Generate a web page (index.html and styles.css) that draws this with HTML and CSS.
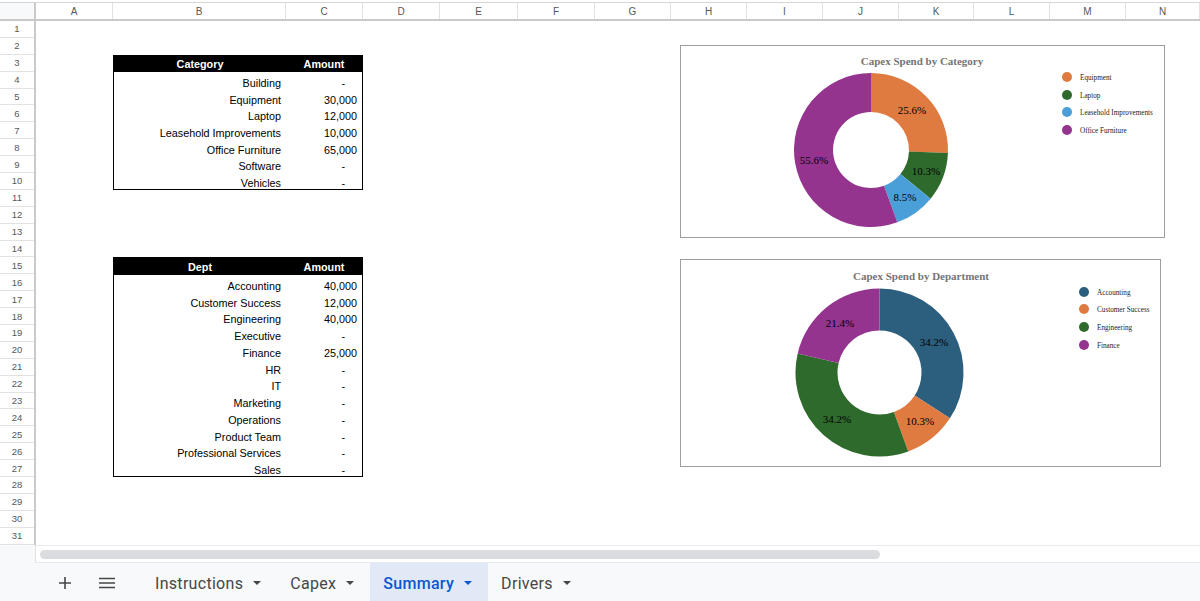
FILE: index.html
```html
<!DOCTYPE html>
<html lang="en">

<head>
    <meta charset="UTF-8">
    <meta name="viewport" content="width=device-width, initial-scale=1.0">
    <title>Capex - Summary</title>

    <link rel="stylesheet" href="styles.css">

</head>

<body>
    <div class="sheet">
        <div class="colheads">
            <div class="corner"></div>
            <div class="colhead">A</div>
            <div class="colhead">B</div>
            <div class="colhead">C</div>
            <div class="colhead">D</div>
            <div class="colhead">E</div>
            <div class="colhead">F</div>
            <div class="colhead">G</div>
            <div class="colhead">H</div>
            <div class="colhead">I</div>
            <div class="colhead">J</div>
            <div class="colhead">K</div>
            <div class="colhead">L</div>
            <div class="colhead">M</div>
            <div class="colhead">N</div>
        </div>

        <div class="main">
            <div class="rowheads">
                <div class="rowhead">1</div>
                <div class="rowhead">2</div>
                <div class="rowhead">3</div>
                <div class="rowhead">4</div>
                <div class="rowhead">5</div>
                <div class="rowhead">6</div>
                <div class="rowhead">7</div>
                <div class="rowhead">8</div>
                <div class="rowhead">9</div>
                <div class="rowhead">10</div>
                <div class="rowhead">11</div>
                <div class="rowhead">12</div>
                <div class="rowhead">13</div>
                <div class="rowhead">14</div>
                <div class="rowhead">15</div>
                <div class="rowhead">16</div>
                <div class="rowhead">17</div>
                <div class="rowhead">18</div>
                <div class="rowhead">19</div>
                <div class="rowhead">20</div>
                <div class="rowhead">21</div>
                <div class="rowhead">22</div>
                <div class="rowhead">23</div>
                <div class="rowhead">24</div>
                <div class="rowhead">25</div>
                <div class="rowhead">26</div>
                <div class="rowhead">27</div>
                <div class="rowhead">28</div>
                <div class="rowhead">29</div>
                <div class="rowhead">30</div>
                <div class="rowhead">31</div>
            </div>

            <div class="cells">
                <!-- category table -->
                <div class="tbl tbl-cat">
                    <div class="th">Category</div>
                    <div class="th">Amount</div>
                    <div class="td">Building</div>
                    <div class="td dash">-</div>
                    <div class="td">Equipment</div>
                    <div class="td">30,000</div>
                    <div class="td">Laptop</div>
                    <div class="td">12,000</div>
                    <div class="td">Leasehold Improvements</div>
                    <div class="td">10,000</div>
                    <div class="td">Office Furniture</div>
                    <div class="td">65,000</div>
                    <div class="td">Software</div>
                    <div class="td dash">-</div>
                    <div class="td">Vehicles</div>
                    <div class="td dash">-</div>
                </div>

                <!-- dept table -->
                <div class="tbl tbl-dept">
                    <div class="th">Dept</div>
                    <div class="th">Amount</div>
                    <div class="td">Accounting</div>
                    <div class="td">40,000</div>
                    <div class="td">Customer Success</div>
                    <div class="td">12,000</div>
                    <div class="td">Engineering</div>
                    <div class="td">40,000</div>
                    <div class="td">Executive</div>
                    <div class="td dash">-</div>
                    <div class="td">Finance</div>
                    <div class="td">25,000</div>
                    <div class="td">HR</div>
                    <div class="td dash">-</div>
                    <div class="td">IT</div>
                    <div class="td dash">-</div>
                    <div class="td">Marketing</div>
                    <div class="td dash">-</div>
                    <div class="td">Operations</div>
                    <div class="td dash">-</div>
                    <div class="td">Product Team</div>
                    <div class="td dash">-</div>
                    <div class="td">Professional Services</div>
                    <div class="td dash">-</div>
                    <div class="td">Sales</div>
                    <div class="td dash">-</div>
                </div>

                <!-- charts float over the grid -->
                <div class="chart chart-cat">
                    <svg viewBox="0 0 483 191" width="483" height="191">
                        <text class="chart-title" x="241" y="19" text-anchor="middle">Capex Spend by Category</text>
                        <path fill="#df7b40" d="M190,27 A77,77 0 0 1 266.94,107.10 L227.97,105.53 A38,38 0 0 0 190,66 Z" />
                        <path fill="#2f6a2d" d="M266.94,107.10 A77,77 0 0 1 249.67,152.66 L219.45,128.02 A38,38 0 0 0 227.97,105.53 Z" />
                        <path fill="#4a9fd8" d="M249.67,152.66 A77,77 0 0 1 216.33,176.36 L203.0,139.71 A38,38 0 0 0 219.45,128.02 Z" />
                        <path fill="#94348f" d="M216.33,176.36 A77,77 0 1 1 190,27 L190,66 A38,38 0 1 0 203.0,139.71 Z" />
                        <text class="slice" x="231" y="68" text-anchor="middle">25.6%</text>
                        <text class="slice" x="245" y="129" text-anchor="middle">10.3%</text>
                        <text class="slice" x="224" y="155" text-anchor="middle">8.5%</text>
                        <text class="slice" x="133" y="118" text-anchor="middle">55.6%</text>

                        <circle cx="386" cy="31" r="5" fill="#df7b40" />
                        <circle cx="386" cy="49" r="5" fill="#2f6a2d" />
                        <circle cx="386" cy="66" r="5" fill="#4a9fd8" />
                        <circle cx="386" cy="84" r="5" fill="#94348f" />
                        <text class="legend" x="399" y="34">Equipment</text>
                        <text class="legend" x="399" y="52">Laptop</text>
                        <text class="legend" x="399" y="69">Leasehold Improvements</text>
                        <text class="legend" x="399" y="87">Office Furniture</text>
                    </svg>
                </div>

                <div class="chart chart-dept">
                    <svg viewBox="0 0 479 206" width="479" height="206">
                        <text class="chart-title" x="240" y="20" text-anchor="middle">Capex Spend by Department</text>
                        <path fill="#2c5e7e" d="M198.5,28.5 A84,84 0 0 1 268.88,158.36 L233.69,135.43 A42,42 0 0 0 198.5,70.5 Z" />
                        <path fill="#df7b40" d="M268.88,158.36 A84,84 0 0 1 227.23,191.43 L212.86,151.97 A42,42 0 0 0 233.69,135.43 Z" />
                        <path fill="#2f6a2d" d="M227.23,191.43 A84,84 0 0 1 116.68,93.49 L157.59,103.0 A42,42 0 0 0 212.86,151.97 Z" />
                        <path fill="#94348f" d="M116.68,93.49 A84,84 0 0 1 198.5,28.5 L198.5,70.5 A42,42 0 0 0 157.59,103.0 Z" />
                        <text class="slice" x="253" y="86" text-anchor="middle">34.2%</text>
                        <text class="slice" x="239" y="165" text-anchor="middle">10.3%</text>
                        <text class="slice" x="156" y="163" text-anchor="middle">34.2%</text>
                        <text class="slice" x="159" y="67" text-anchor="middle">21.4%</text>

                        <circle cx="403" cy="32" r="5" fill="#2c5e7e" />
                        <circle cx="403" cy="49" r="5" fill="#df7b40" />
                        <circle cx="403" cy="67" r="5" fill="#2f6a2d" />
                        <circle cx="403" cy="85" r="5" fill="#94348f" />
                        <text class="legend" x="416" y="35">Accounting</text>
                        <text class="legend" x="416" y="52">Customer Success</text>
                        <text class="legend" x="416" y="70">Engineering</text>
                        <text class="legend" x="416" y="88">Finance</text>
                    </svg>
                </div>
            </div>
        </div>

        <div class="hscroll">
            <div class="hscroll-corner"></div>
            <div class="track">
                <div class="thumb"></div>
            </div>
        </div>

        <div class="tabbar">
            <div class="tb-btn">
                <svg width="14" height="14" viewBox="0 0 14 14">
                    <path d="M7 1v12M1 7h12" stroke="#444746" stroke-width="1.6" fill="none" />
                </svg>
            </div>
            <div class="tb-btn">
                <svg width="16" height="12" viewBox="0 0 16 12">
                    <path d="M0 1.5h16M0 6h16M0 10.5h16" stroke="#444746" stroke-width="1.5" fill="none" />
                </svg>
            </div>
            <div class="tabs">
                <div class="tab">Instructions <span class="caret"></span></div>
                <div class="tab">Capex <span class="caret"></span></div>
                <div class="tab active">Summary <span class="caret"></span></div>
                <div class="tab">Drivers <span class="caret"></span></div>
            </div>
        </div>
    </div>
</body>

</html>
```

FILE: styles.css
```css
body {
    margin: 0;
    font-family: "Liberation Sans", Arial, sans-serif;
    background-color: #fff;
    overflow: hidden;
}

.sheet {
    width: 1200px;
    height: 601px;
    display: flex;
    flex-direction: column;
}

/* column letters */
.colheads {
    display: grid;
    grid-template-columns: 36px 77px 173px 77px 77px 78px 77px 76px 76px 76px 76px 75px 76px 76px 1fr;
    height: 19px;
    margin-top: 2px;
    box-sizing: border-box;
    border-top: 1px solid #d6d6d6;
    border-bottom: 2px solid #c9c9c9;
    flex-shrink: 0;
}

.corner {
    background-color: #f8f9fa;
    border-right: 2px solid #c9c9c9;
}

.colhead {
    border-right: 1px solid #e2e2e2;
    font-size: 10px;
    color: #575757;
    display: flex;
    align-items: center;
    justify-content: center;
}

.main {
    display: flex;
    height: 524px;
    flex-shrink: 0;
}

.rowheads {
    width: 36px;
    flex-shrink: 0;
    box-sizing: border-box;
    border-right: 2px solid #c9c9c9;
}

.rowhead {
    height: 16.9px;
    box-sizing: border-box;
    border-bottom: 1px solid #e2e2e2;
    font-size: 9.5px;
    color: #575757;
    display: flex;
    align-items: center;
    justify-content: center;
}

.cells {
    flex: 1;
    position: relative;
    display: grid;
    grid-template-columns: 77px 173px 77px 1fr;
    grid-template-rows: repeat(31, 16.9px);
}

/* data tables */
.tbl {
    border: 1px solid #000;
    display: grid;
    grid-template-columns: 172px 1fr;
    grid-auto-rows: 1fr;
    font-size: 10.8px;
    color: #000;
}

.tbl-cat {
    grid-column: 2 / 4;
    grid-row: 3 / 11;
}

.tbl-dept {
    grid-column: 2 / 4;
    grid-row: 15 / 28;
}

.th {
    background-color: #000;
    color: #fff;
    font-weight: bold;
    display: flex;
    align-items: center;
    justify-content: center;
}

.td {
    display: flex;
    align-items: flex-end;
    justify-content: flex-end;
    line-height: 12px;
    padding: 0 5px 0 0;
    overflow: hidden;
}

.td.dash {
    padding-right: 17px;
}

/* charts */
.chart {
    position: absolute;
    background-color: #fff;
    border: 1px solid #9e9e9e;
}

.chart svg {
    display: block;
}

.chart-cat {
    left: 644px;
    top: 24px;
    width: 483px;
    height: 191px;
}

.chart-dept {
    left: 644px;
    top: 238px;
    width: 479px;
    height: 206px;
}

.chart-title {
    font-family: "Liberation Serif", "Times New Roman", serif;
    font-size: 11px;
    font-weight: bold;
    fill: #757575;
}

.slice {
    font-family: "Liberation Serif", "Times New Roman", serif;
    font-size: 11px;
    fill: #000;
}

.legend {
    font-family: "Liberation Serif", "Times New Roman", serif;
    font-size: 7.2px;
    fill: #222;
}

/* scrollbar */
.hscroll {
    display: flex;
    height: 18px;
    flex-shrink: 0;
}

.hscroll-corner {
    width: 36px;
    background-color: #f8f9fa;
    box-sizing: border-box;
    border-right: 1px solid #e2e2e2;
}

.track {
    flex: 1;
    box-sizing: border-box;
    border-top: 1px solid #e8eaed;
    border-bottom: 1px solid #e8eaed;
    padding: 4px 0 0 4px;
}

.thumb {
    width: 840px;
    height: 9px;
    border-radius: 5px;
    background-color: #dadce0;
}

/* sheet tabs */
.tabbar {
    flex: 1;
    background-color: #f8f9fa;
    display: flex;
    padding-left: 45px;
}

.tb-btn {
    width: 40px;
    margin-right: 2px;
    padding-top: 2px;
    display: flex;
    align-items: center;
    justify-content: center;
}

.tabs {
    display: flex;
    margin-left: 13px;
}

.tab {
    display: flex;
    align-items: center;
    gap: 10px;
    padding: 2px 16px 0 13px;
    font-family: Roboto, "Liberation Sans", sans-serif;
    font-size: 16px;
    letter-spacing: 0.3px;
    color: #444746;
}

.tab.active {
    background-color: #e1e9f7;
    color: #0b57d0;
    font-weight: 500;
}

.caret {
    width: 0;
    height: 0;
    border-left: 4px solid transparent;
    border-right: 4px solid transparent;
    border-top: 4px solid currentColor;
}
```
